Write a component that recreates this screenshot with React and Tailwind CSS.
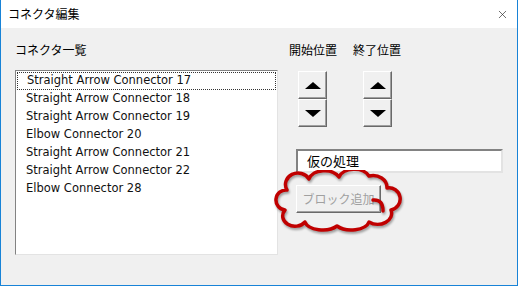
import { X } from "lucide-react";

const connectors = [
  "Straight Arrow Connector 17",
  "Straight Arrow Connector 18",
  "Straight Arrow Connector 19",
  "Elbow Connector 20",
  "Straight Arrow Connector 21",
  "Straight Arrow Connector 22",
  "Elbow Connector 28",
];

const jp = "font-['Noto_Sans_CJK_JP','Noto_Sans',sans-serif]";

function SpinButton({ up }) {
  return (
    <div className="flex h-[28px] w-[29px] items-center justify-center border border-t-white border-l-white border-r-[#696969] border-b-[#696969] bg-[#f0f0f0] shadow-[inset_-1px_-1px_0_#a0a0a0]">
      <div
        className={
          up
            ? "h-0 w-0 border-x-[8px] border-b-[7px] border-x-transparent border-b-black"
            : "h-0 w-0 border-x-[8px] border-t-[7px] border-x-transparent border-t-black"
        }
      />
    </div>
  );
}

function Cloud() {
  return (
    <svg
      width="132"
      height="64"
      viewBox="0 0 132 64"
      className="absolute left-[272px] top-[170px] drop-shadow-[1px_2px_1px_rgba(0,0,0,0.35)]"
    >
      <path
        d="M 14 20 A 12 11 0 0 1 36 9 A 16 11 0 0 1 66 7 A 16 11 0 0 1 96 6 A 14 12 0 0 1 114 18 A 10 10 0 0 1 118 40 A 14 11 0 0 1 96 52 A 18 10 0 0 1 64 56 A 18 10 0 0 1 32 52 A 12 10 0 0 1 12 40 A 10 10 0 0 1 14 20 Z"
        fill="none"
        stroke="#c00000"
        strokeWidth="3.5"
        strokeLinejoin="round"
      />
      <path
        d="M 100 30 Q 110 29 110 41"
        fill="none"
        stroke="#c00000"
        strokeWidth="3.5"
        strokeLinecap="round"
      />
    </svg>
  );
}

export default function App() {
  return (
    <div className="h-[287px] w-[520px] bg-white">
      <div className="relative flex h-[286px] w-[518px] flex-col border-x border-b border-[#1883d7]">
        {/* title bar */}
        <div className="flex h-[28px] items-center justify-between bg-white pl-[7px] pr-[8px]">
          <span className={`${jp} text-[12px] text-black`}>コネクタ編集</span>
          <X className="h-[13px] w-[13px] text-[#222]" strokeWidth={1.2} />
        </div>

        {/* body */}
        <div className={`flex flex-1 bg-[#f0f0f0] pl-[14px] ${jp}`}>
          <div className="flex w-[263px] flex-col pt-[13px]">
            <span className="h-[17px] text-[12px] leading-[17px] text-black">
              コネクタ一覧
            </span>
            <div className="mt-[12px] h-[185px] border border-t-[#828282] border-l-[#828282] border-r-[#e3e3e3] border-b-[#e3e3e3] bg-white p-px">
              {connectors.map((name, i) => (
                <div
                  key={name}
                  className={`flex h-[18px] items-center pl-[9px] font-['DejaVu_Sans',sans-serif] text-[11.5px] text-[#111] ${
                    i === 0 ? "border border-dotted border-[#333] pl-[8px]" : ""
                  }`}
                >
                  {name}
                </div>
              ))}
            </div>
          </div>

          <div className="ml-[11px] flex flex-col pt-[13px]">
            <div className="flex h-[17px] gap-[16px] text-[12px] leading-[17px] text-black">
              <span>開始位置</span>
              <span>終了位置</span>
            </div>
            <div className="mt-[13px] flex gap-[36px] pl-[9px]">
              <div className="flex flex-col">
                <SpinButton up />
                <SpinButton />
              </div>
              <div className="flex flex-col">
                <SpinButton up />
                <SpinButton />
              </div>
            </div>
            <div className="ml-[7px] mt-[22px] flex h-[24px] w-[207px] items-center border-2 border-t-[#828282] border-l-[#828282] border-r-[#e3e3e3] border-b-[#e3e3e3] bg-white pl-[9px] text-[13px] text-black">
              仮の処理
            </div>
            <div className="ml-[7px] mt-[12px] flex h-[28px] w-[85px] items-center justify-center border border-t-white border-l-white border-r-[#696969] border-b-[#696969] bg-[#f0f0f0] text-[12px] text-[#a0a0a0] shadow-[inset_-1px_-1px_0_#a0a0a0]">
              ブロック追加
            </div>
          </div>
        </div>

        <Cloud />
      </div>
    </div>
  );
}
